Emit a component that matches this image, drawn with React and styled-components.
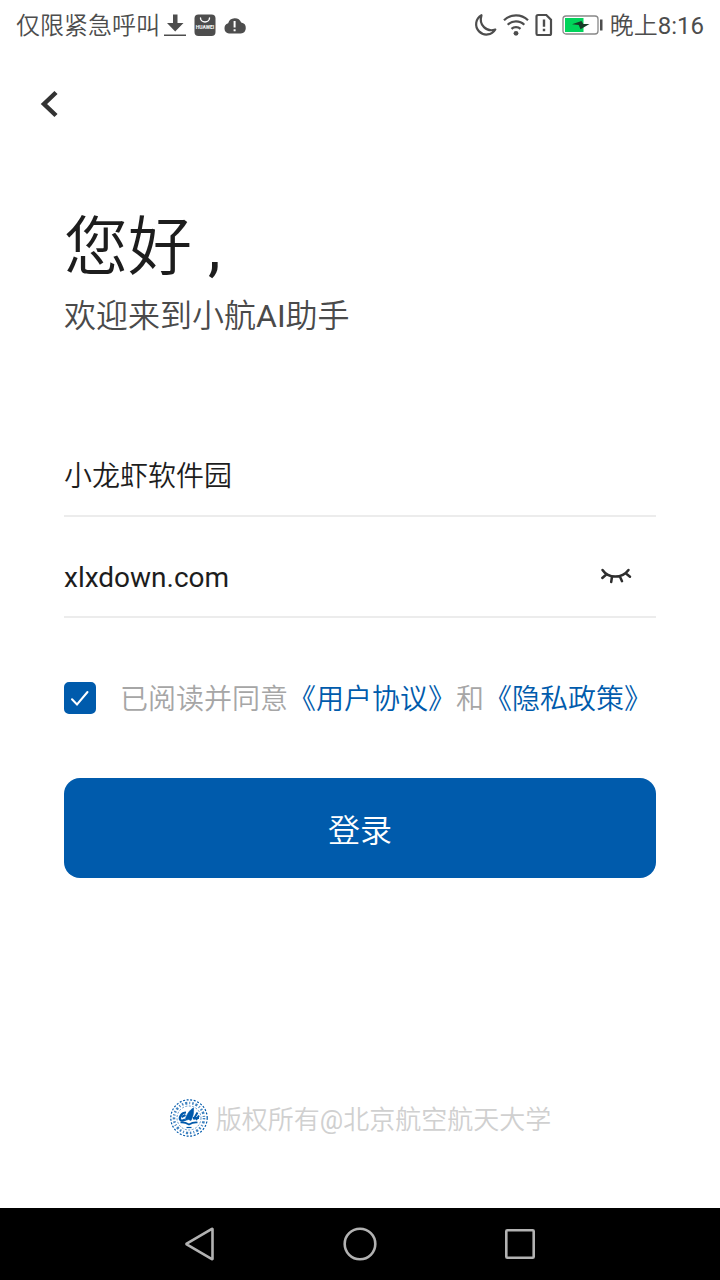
import React, { useState } from 'react';
import styled, { createGlobalStyle } from 'styled-components';


export default function App() {
    const [account, setAccount] = useState('小龙虾软件园');
    const [password, setPassword] = useState('xlxdown.com');
    const [agreed, setAgreed] = useState(true);

    return (
        <Screen>
            <GlobalStyle />
            <StatusBar>
                <StatusGroup>
                    <StatusText>仅限紧急呼叫</StatusText>
                    <StatusIcons>
                        <DownloadIcon />
                        <StoreIcon />
                        <CloudIcon />
                    </StatusIcons>
                </StatusGroup>
                <StatusGroup $gap={6}>
                    <StatusIcons>
                        <MoonIcon />
                        <WifiIcon />
                        <SimIcon />
                        <BatteryIcon />
                    </StatusIcons>
                    <StatusText>晚上<Latin>8:16</Latin></StatusText>
                </StatusGroup>
            </StatusBar>
            <Header>
                <IconButton type="button" aria-label="返回">
                    <svg width="20" height="28" viewBox="0 0 20 28" fill="none" stroke="#333" strokeWidth="4.5">
                        <path d="M18 2.500 6 14l12 11.500" />
                    </svg>
                </IconButton>
            </Header>
            <Main>
                <Title>您好<Latin> ,</Latin></Title>
                <Subtitle>欢迎来到小航<Latin>AI</Latin>助手</Subtitle>
                <Form onSubmit={(e) => e.preventDefault()}>
                    <Field>
                        <Input
                            aria-label="账号"
                            value={account}
                            onChange={(e) => setAccount(e.target.value)}
                        />
                    </Field>
                    <Field>
                        <Input
                            $latin
                            aria-label="密码"
                            value={password}
                            onChange={(e) => setPassword(e.target.value)}
                        />
                        <IconButton type="button" aria-label="隐藏密码">
                            <EyeIcon />
                        </IconButton>
                    </Field>
                    <Agreement>
                        <CheckWrap>
                            <Checkbox
                                id="agree"
                                type="checkbox"
                                checked={agreed}
                                onChange={(e) => setAgreed(e.target.checked)}
                            />
                            {agreed && (
                                <CheckMark viewBox="0 0 32 32">
                                    <path d="M8 17.200 13 22.400 23.500 10" />
                                </CheckMark>
                            )}
                        </CheckWrap>
                        <Terms>
                            <label htmlFor="agree">已阅读并同意</label>
                            <TermsLink href="#terms">《用户协议》</TermsLink>
                            和
                            <TermsLink href="#privacy">《隐私政策》</TermsLink>
                        </Terms>
                    </Agreement>
                    <LoginButton type="submit">登录</LoginButton>
                </Form>
            </Main>
            <Footer>
                <SealLogo />
                <Copyright>版权所有<Latin>@</Latin>北京航空航天大学</Copyright>
            </Footer>
            <NavBar>
                <IconButton type="button" aria-label="后退">
                    <NavIcon viewBox="0 0 36 36">
                        <path d="M30.500 3.200v29.600q0 .6-.6.300L4.700 18.400q-.5-.4 0-.8L29.900 2.900q.6-.3.600.3z" />
                    </NavIcon>
                </IconButton>
                <IconButton type="button" aria-label="主屏幕">
                    <NavIcon viewBox="0 0 36 36">
                        <circle cx="18" cy="18" r="15.300" />
                    </NavIcon>
                </IconButton>
                <IconButton type="button" aria-label="最近任务">
                    <NavIcon viewBox="0 0 36 36">
                        <rect x="4.300" y="4.300" width="27.400" height="27.400" rx="1" />
                    </NavIcon>
                </IconButton>
            </NavBar>
        </Screen>
    );
}


const DownloadIcon = () => (
    <svg width="24" height="24" viewBox="0 0 24 24" fill="#4d4d4d">
        <path d="M10 1.500h4.500v8.500H20.500l-8.300 8.500L4 10h6z" />
        <path d="M1 21.500h22V23H1z" />
    </svg>
);

const StoreIcon = () => (
    <svg width="24" height="24" viewBox="0 0 24 24">
        <rect x="1.500" y="1.500" width="21" height="21.500" rx="4" fill="#4d4d4d" />
        <path d="M7.500 5a4.500 4 0 0 0 9 0" fill="none" stroke="#fff" strokeWidth="1.400" strokeLinecap="round" />
        <text x="12" y="16" textAnchor="middle" fontSize="5" fontWeight="700" fill="#fff">HUAWEI</text>
    </svg>
);

const CloudIcon = () => (
    <svg width="24" height="24" viewBox="0 0 24 24">
        <path
            d="M6 20.500a5.300 5.300 0 0 1-.8-10.300 6.900 6.900 0 0 1 13-.6 5.500 5.500 0 0 1-.4 10.900z"
            fill="#4d4d4d"
        />
        <path d="M11.600 8v6.500M11.600 16.300v2" stroke="#fff" strokeWidth="2" />
    </svg>
);

const MoonIcon = () => (
    <svg width="24" height="24" viewBox="0 0 24 24" fill="none" stroke="#4d4d4d" strokeWidth="2.200" strokeLinejoin="round">
        <path d="M8.500 2.200A10.300 10.300 0 1 0 22.300 16.500C13.500 19.500 5.500 12 8.500 2.200z" />
    </svg>
);

const WifiIcon = () => (
    <svg width="26" height="24" viewBox="0 0 26 24" fill="none" stroke="#4d4d4d" strokeWidth="2.200">
        <path d="M1 7.200C7.500.7 18.500.7 25 7.200M4.700 11.700c4.500-4.500 12.100-4.500 16.600 0M8.500 15.900c2.500-2.400 6.500-2.400 9 0" />
        <circle cx="13" cy="20.300" r="2.400" fill="#4d4d4d" stroke="none" />
    </svg>
);

const SimIcon = () => (
    <svg width="21" height="24" viewBox="0 0 21 24" fill="none" stroke="#4d4d4d" strokeWidth="2.200">
        <path d="M2.500 2h8.800L16 6.800V20.500q0 1.500-1.500 1.500h-12Q1.500 22 1.500 20.500v-17Q1.500 2 3 2z" />
        <path d="M9 6.500v7.200M9 15.700v2.600" strokeWidth="2.400" />
    </svg>
);

const BatteryIcon = () => (
    <svg width="42" height="24" viewBox="0 0 42 24">
        <rect x="1" y="3" width="35" height="18" rx="3" fill="#fff" stroke="#888" strokeWidth="1.300" />
        <path d="M3 5h18.500v14H3z" fill="#00d45a" />
        <path d="M10 11.300 19.500 8l1.800 3h6.200L18.500 16.200l-1.800-4.200z" fill="#173b27" />
        <path d="M38 6.500h2.500v11H38z" fill="#4d4d4d" />
    </svg>
);

const EyeIcon = () => (
    <svg width="32" height="22" viewBox="0 0 32 22" fill="none" stroke="#2e2e2e" strokeWidth="2.500" strokeLinecap="round">
        <path d="M2.500 3C8.500 11.800 22 11.800 28.500 3M6 7.700 2.300 11M12 9.800 11.200 15M20 9.800l2 4.400M26 6.500l4 3.300" />
    </svg>
);

const SealLogo = () => (
    <svg width="40" height="40" viewBox="0 0 40 40" fill="none" stroke="#0059ab">
        <circle cx="20" cy="20" r="18.200" strokeWidth="1.200" strokeDasharray="2 1.600" />
        <circle cx="20" cy="20" r="15" strokeWidth="2.600" strokeDasharray="1.500 1.800 2.200 2 1 2" strokeOpacity=".75" />
        <circle cx="20" cy="20" r="12" strokeWidth="1" strokeDasharray="2 1.500" strokeOpacity=".6" />
        <path d="M24.500 10c-4 2-7 6.500-8.500 12.500l3.500-1 2.500 1c2-3.500 3-8 2.500-12.500z" fill="#0059ab" strokeWidth=".6" />
        <path d="M17 14.500c-4.500 0-7.500 5-5.500 7.500 1 1 3 .5 4.500-.5" strokeWidth="2.200" />
        <path d="M12.500 19l4-2M28.500 14.500l-4 7M30 17.500l-3 4.500M24 20h6" strokeWidth="2" />
        <path d="M11.500 24.500q4.500-.5 8.500 2 4-2.500 8.500-2" strokeWidth="1.600" />
        <path d="M17.500 29.500h5" strokeWidth="1.200" />
    </svg>
);


const GlobalStyle = createGlobalStyle`
    * {
        box-sizing: border-box;
    }

    body {
        margin: 0;
        background: #fff;
        font-family: Roboto, "Noto Sans CJK SC", sans-serif;
        font-weight: 350;
    }

    button,
    input {
        font-family: inherit;
        font-weight: inherit;
    }
`;

const Screen = styled.div`
    min-height: 100vh;
    display: flex;
    flex-direction: column;
`;

const Latin = styled.span`
    font-weight: 400;
`;

const StatusBar = styled.div`
    height: 50px;
    padding: 0 16px;
    display: flex;
    align-items: center;
    justify-content: space-between;
    color: #4d4d4d;
    font-size: 24px;
`;

const StatusGroup = styled.div`
    display: flex;
    align-items: center;
    gap: ${({ $gap = 3 }) => $gap}px;
`;

const StatusText = styled.span`
    padding-top: 2px;
    line-height: 32px;
`;

const StatusIcons = styled.div`
    display: flex;
    gap: 6px;
`;

const IconButton = styled.button`
    display: flex;
    padding: 0;
    border: 0;
    background: none;
    cursor: pointer;
`;

const Header = styled.header`
    padding: 40px 38px 0;
`;

const Main = styled.main`
    padding: 82px 64px 0;
`;

const Title = styled.h1`
    margin: 0;
    color: #1d1d1d;
    font-size: 64px;
    font-weight: inherit;
    line-height: 96px;
`;

const Subtitle = styled.p`
    margin: 0;
    color: #4a4a4a;
    font-size: 32px;
    line-height: 40px;
`;

const Form = styled.form`
    margin-top: 80px;
`;

const Field = styled.div`
    height: 101px;
    padding: 22px 24px 0 0;
    display: flex;
    align-items: center;
    border-bottom: 2px solid #ececec;
`;

const Input = styled.input`
    flex: 1;
    min-width: 0;
    padding: 0;
    border: 0;
    outline: 0;
    background: none;
    color: #1d1d1d;
    font-size: 28px;
    font-weight: ${({ $latin }) => ($latin ? 400 : 350)};
    line-height: 40px;
`;

const Agreement = styled.div`
    margin-top: 60px;
    display: flex;
    align-items: center;
    gap: 24px;
`;

const CheckWrap = styled.span`
    position: relative;
    width: 32px;
    height: 32px;
`;

const Checkbox = styled.input`
    appearance: none;
    display: block;
    width: 32px;
    height: 32px;
    margin: 0;
    border: 2px solid #005bac;
    border-radius: 5px;

    &:checked {
        background: #005bac;
    }
`;

const CheckMark = styled.svg`
    position: absolute;
    inset: 0;
    fill: none;
    stroke: #fff;
    stroke-width: 2;
    stroke-linecap: round;
    pointer-events: none;
`;

const Terms = styled.div`
    padding-top: 4px;
    color: #a6a6a6;
    font-size: 28px;
    line-height: 36px;
`;

const TermsLink = styled.a`
    color: #005bac;
    text-decoration: none;
`;

const LoginButton = styled.button`
    width: 100%;
    height: 100px;
    margin-top: 60px;
    border: 0;
    border-radius: 16px;
    background: #005bac;
    color: #fff;
    font-size: 32px;
    cursor: pointer;
`;

const Footer = styled.footer`
    margin-top: auto;
    padding-bottom: 70px;
    display: flex;
    align-items: center;
    justify-content: center;
    gap: 7px;
    color: #d0d0d0;
    font-size: 26px;
`;

const Copyright = styled.span`
    padding-top: 4px;
    line-height: 36px;
`;

const NavBar = styled.nav`
    height: 72px;
    display: flex;
    align-items: center;
    justify-content: center;
    gap: 124px;
    background: #000;
`;

const NavIcon = styled.svg`
    width: 36px;
    height: 36px;
    fill: none;
    stroke: #b2b2b2;
    stroke-width: 2.6;
    stroke-linejoin: round;
`;
